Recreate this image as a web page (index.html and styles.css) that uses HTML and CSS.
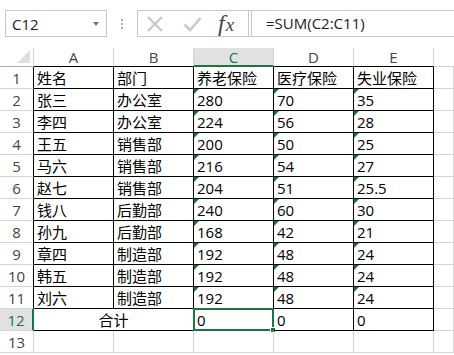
FILE: index.html
```html
<!DOCTYPE html>
<html lang="zh">
<head>
<meta charset="utf-8">
<link rel="stylesheet" href="styles.css">
</head>
<body>
<div class="toolbar">
  <div class="namebox">
    <span class="nb-text">C12</span>
    <span class="nb-arrow"></span>
  </div>
  <div class="dots"><i></i><i></i><i></i></div>
  <div class="fbar">
    <div class="fbtns">
      <svg class="ico" width="18" height="16" viewBox="0 0 18 16"><path d="M2 1 L16 15 M16 1 L2 15" stroke="#cacaca" stroke-width="2.4" fill="none"/></svg>
      <svg class="ico chk" width="19" height="16" viewBox="0 0 19 16"><path d="M1.5 8.5 L7 14 L17.5 2" stroke="#cacaca" stroke-width="2.6" fill="none"/></svg>
      <span class="fx"><span class="fx-f">f</span><span class="fx-x">x</span></span>
    </div>
    <div class="finput">=SUM(C2:C11)</div>
  </div>
</div>

<div class="sheet">
  <div class="hd corner"><span class="tri"></span></div>
  <div class="hd col">A</div>
  <div class="hd col">B</div>
  <div class="hd col sel">C</div>
  <div class="hd col">D</div>
  <div class="hd col">E</div>
  <div class="hd colf"></div>

  <div class="rh">1</div>
  <div class="c t">姓名</div><div class="c t">部门</div><div class="c t">养老保险</div><div class="c t">医疗保险</div><div class="c t">失业保险</div><div class="c g"></div>

  <div class="rh">2</div>
  <div class="c t">张三</div><div class="c t">办公室</div><div class="c t n">280</div><div class="c t n">70</div><div class="c t n">35</div><div class="c g"></div>

  <div class="rh">3</div>
  <div class="c t">李四</div><div class="c t">办公室</div><div class="c t n">224</div><div class="c t n">56</div><div class="c t n">28</div><div class="c g"></div>

  <div class="rh">4</div>
  <div class="c t">王五</div><div class="c t">销售部</div><div class="c t n">200</div><div class="c t n">50</div><div class="c t n">25</div><div class="c g"></div>

  <div class="rh">5</div>
  <div class="c t">马六</div><div class="c t">销售部</div><div class="c t n">216</div><div class="c t n">54</div><div class="c t n">27</div><div class="c g"></div>

  <div class="rh">6</div>
  <div class="c t">赵七</div><div class="c t">销售部</div><div class="c t n">204</div><div class="c t n">51</div><div class="c t n">25.5</div><div class="c g"></div>

  <div class="rh">7</div>
  <div class="c t">钱八</div><div class="c t">后勤部</div><div class="c t n">240</div><div class="c t n">60</div><div class="c t n">30</div><div class="c g"></div>

  <div class="rh">8</div>
  <div class="c t">孙九</div><div class="c t">后勤部</div><div class="c t n">168</div><div class="c t n">42</div><div class="c t n">21</div><div class="c g"></div>

  <div class="rh">9</div>
  <div class="c t">章四</div><div class="c t">制造部</div><div class="c t n">192</div><div class="c t n">48</div><div class="c t n">24</div><div class="c g"></div>

  <div class="rh">10</div>
  <div class="c t">韩五</div><div class="c t">制造部</div><div class="c t n">192</div><div class="c t n">48</div><div class="c t n">24</div><div class="c g"></div>

  <div class="rh">11</div>
  <div class="c t">刘六</div><div class="c t">制造部</div><div class="c t n">192</div><div class="c t n">48</div><div class="c t n">24</div><div class="c g"></div>

  <div class="rh rsel">12</div>
  <div class="c t merged">合计</div><div class="c t active">0<span class="selbox"><span class="handle"></span></span></div><div class="c t">0</div><div class="c t">0</div><div class="c g"></div>

  <div class="rh last">13</div>
  <div class="c g"></div><div class="c g"></div><div class="c g"></div><div class="c g"></div><div class="c g"></div><div class="c g"></div>
</div>
</body>
</html>
```

FILE: styles.css
```css
* { box-sizing: border-box; }
html, body { margin: 0; padding: 0; background: #fff; }
body {
  width: 454px;
  height: 355px;
  overflow: hidden;
  font-family: "Open Sans", "Noto Sans CJK SC", sans-serif;
  color: #000;
}

/* toolbar */
.toolbar {
  height: 48px;
  display: flex;
  align-items: flex-start;
  padding-top: 10px;
}
.namebox {
  margin-left: 5px;
  width: 102px;
  height: 27px;
  border: 1px solid #c6c6c6;
  display: flex;
  align-items: center;
  justify-content: space-between;
  padding: 0 7px 0 6px;
}
.nb-text { font-size: 15px; line-height: 20px; color: #222; }
.nb-arrow {
  width: 0; height: 0;
  border-left: 3.5px solid transparent;
  border-right: 3.5px solid transparent;
  border-top: 4px solid #777;
}
.dots {
  width: 30px;
  height: 27px;
  display: flex;
  flex-direction: column;
  align-items: center;
  justify-content: center;
  gap: 2px;
}
.dots i { display: block; width: 2px; height: 2px; background: #b0b0b0; }
.fbar {
  flex: 1;
  height: 27px;
  display: flex;
  border: 1px solid #c6c6c6;
  border-right: none;
}
.fbtns {
  width: 111px;
  display: flex;
  align-items: center;
  padding-left: 8px;
  border-right: 1px solid #c6c6c6;
}
.ico { display: block; }
.chk { margin-left: 19px; }
.fx {
  margin-left: 16px;
  font-family: "Liberation Serif", serif;
  font-style: italic;
  color: #444;
  display: flex;
  align-items: baseline;
  line-height: 22px;
}
.fx-f { font-size: 24px; }
.fx-x { font-size: 19px; margin-left: 1px; }
.finput {
  flex: 1;
  margin-left: 2px;
  border-left: 1px solid #c6c6c6;
  padding-left: 14px;
  font-size: 15px;
  line-height: 25px;
  color: #222;
}

/* sheet */
.sheet {
  display: grid;
  grid-template-columns: 34px repeat(5, 80px) 1fr;
  grid-template-rows: 19px repeat(13, 22px);
}
.hd {
  background: #fff;
  border-right: 1px solid #d4d4d4;
  border-bottom: 1px solid #ababab;
  color: #444;
  font-size: 15px;
  display: flex;
  align-items: center;
  justify-content: center;
  line-height: 18px;
}
.corner { position: relative; border-bottom-color: #ababab; }
.tri {
  position: absolute;
  right: 3px;
  bottom: 3px;
  width: 0; height: 0;
  border-left: 13px solid transparent;
  border-bottom: 13px solid #dfdfdf;
}
.col { border-bottom-color: #000; }
.colf { border-right: none; border-bottom-color: #d4d4d4; }
.hd.sel {
  background: #e1e1e1;
  color: #217346;
  border-bottom: 2px solid #217346;
}
.rh {
  border-right: 1px solid #000;
  border-bottom: 1px solid #d4d4d4;
  color: #444;
  font-size: 15px;
  display: flex;
  align-items: center;
  justify-content: center;
  line-height: 20px;
}
.rh.last { border-right-color: #d4d4d4; }
.rh.rsel {
  background: #e1e1e1;
  color: #217346;
  border-right: 2px solid #217346;
}
.c {
  position: relative;
  border-right: 1px solid #d4d4d4;
  border-bottom: 1px solid #d4d4d4;
  font-size: 15px;
  line-height: 20px;
  display: flex;
  align-items: center;
  padding-left: 3px;
  white-space: nowrap;
  overflow: visible;
}
.c.t { border-right-color: #000; border-bottom-color: #000; }
.n::before {
  content: "";
  position: absolute;
  left: 0;
  top: 0;
  width: 0; height: 0;
  border-top: 5px solid #1e7145;
  border-right: 5px solid transparent;
}
.merged { grid-column: span 2; justify-content: center; padding-left: 0; }
.selbox {
  position: absolute;
  left: -1px;
  top: -1px;
  right: -1px;
  bottom: -1px;
  border: 2px solid #217346;
  pointer-events: none;
}
.handle {
  position: absolute;
  right: -4px;
  bottom: -4px;
  width: 6px;
  height: 6px;
  background: #217346;
  border: 1px solid #fff;
}
```
